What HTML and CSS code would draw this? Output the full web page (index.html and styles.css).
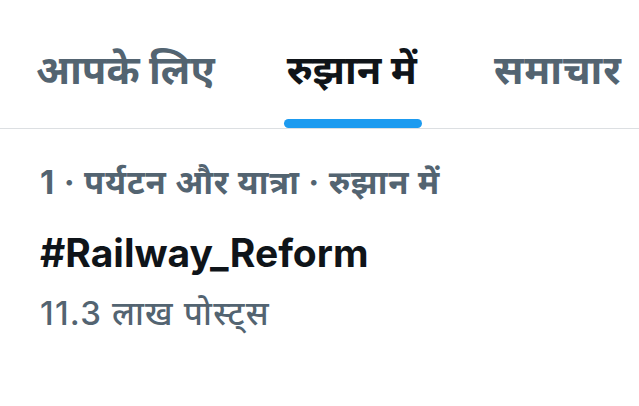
FILE: index.html
```html
<!DOCTYPE html>
<html lang="hi">
<head>
  <meta charset="UTF-8" />
  <meta name="viewport" content="width=device-width, initial-scale=1.0"/>
  <title>रुझान में</title>
  <link rel="stylesheet" href="styles.css">
</head>
<body>
  <nav class="tabs">
    <div class="tab">आपके लिए</div>
    <div class="tab active">रुझान में</div>
    <div class="tab">समाचार</div>
  </nav>

  <div class="trend">
    <div class="trend-meta">1 · पर्यटन और यात्रा · रुझान में</div>
    <div class="trend-name">#Railway_Reform</div>
    <div class="trend-count">11.3 लाख पोस्ट्स</div>
  </div>
</body>
</html>
```

FILE: styles.css
```css
body {
  margin: 0;
  padding: 0;
  font-family: 'Inter', 'Noto Sans', sans-serif;
  background-color: #fff;
  color: #536471;
  width: 639px;
  height: 406px;
  overflow: hidden;
}

.tabs {
  display: flex;
  align-items: flex-end;
  height: 128px;
  padding-left: 36px;
  gap: 72px;
  border-bottom: 1px solid #dcdfe2;
  white-space: nowrap;
}

.tab {
  position: relative;
  font-size: 40px;
  font-weight: 700;
  line-height: 1.2;
  color: #536471;
  padding-bottom: 34px;
}

.tab:last-child {
  margin-left: 5px;
  letter-spacing: 0.8px;
}

.tab.active {
  color: #0f1419;
}

.tab.active::after {
  content: "";
  position: absolute;
  left: -3px;
  right: -5px;
  bottom: 0;
  height: 9px;
  border-radius: 5px;
  background: #1d9bf0;
}

.trend {
  padding: 34px 40px 0;
}

.trend-meta {
  font-size: 33px;
  font-weight: 700;
  line-height: 1.2;
  letter-spacing: 0.8px;
  color: #536471;
}

.trend-name {
  margin-top: 27px;
  font-size: 39px;
  font-weight: 700;
  line-height: 1.2;
  color: #0f1419;
}

.trend-count {
  margin-top: 18px;
  font-size: 33px;
  font-weight: 500;
  line-height: 1.2;
  letter-spacing: 1.2px;
  color: #536471;
}
```
